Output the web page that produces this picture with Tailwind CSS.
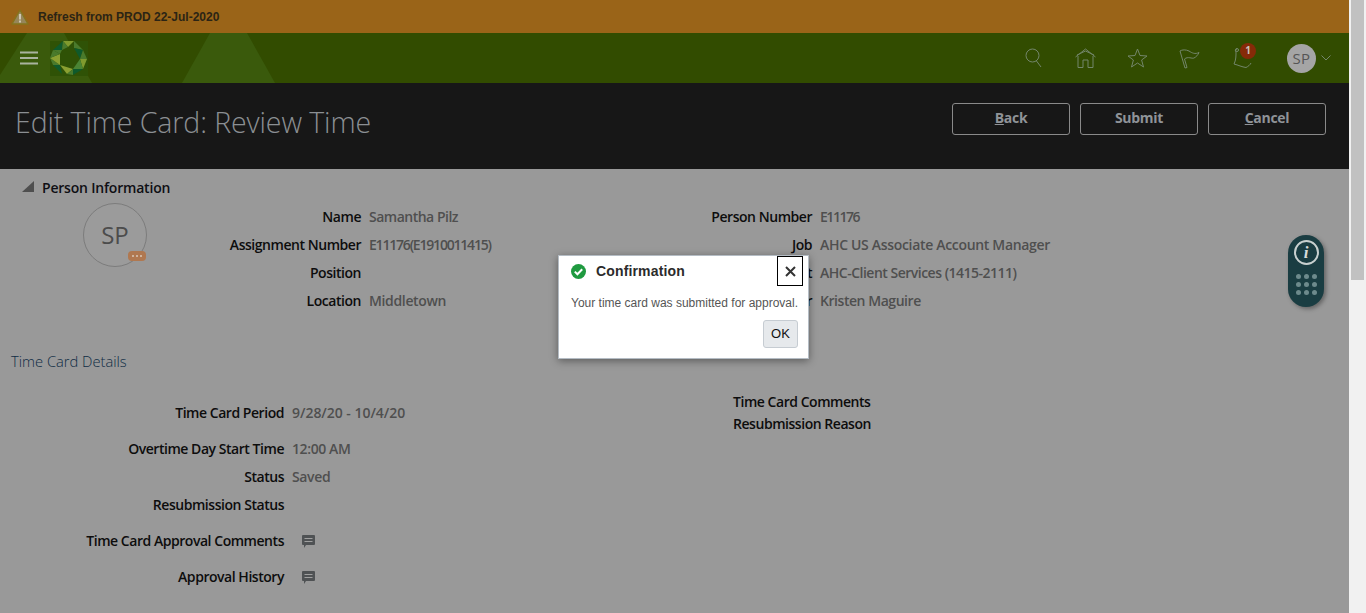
<!DOCTYPE html>
<html>
<head>
<meta charset="utf-8">
<script src="https://cdn.jsdelivr.net/npm/@tailwindcss/browser@4"></script>
</head>
<body class="overflow-hidden">
<div class="relative flex h-[613px] w-[1366px] overflow-hidden font-['Open_Sans',sans-serif]">
  <main class="w-[1349px] shrink-0 bg-[#999999]">
    <div class="flex h-[33px] items-center bg-[#9a6418] pl-[11px] font-['Liberation_Sans',sans-serif] text-[12px] font-bold text-[#2b2415]">
      <svg width="18" height="16" viewBox="0 0 18 16" class="mr-[9px] shrink-0"><path d="M9 1 L17 15 H1 Z" fill="#96865a" stroke="#85741c" stroke-width="1.4" stroke-linejoin="round"/><rect x="8" y="5" width="2" height="5.5" fill="#cfc8b4"/><rect x="8" y="11.5" width="2" height="2" fill="#cfc8b4"/></svg>
      Refresh from PROD 22-Jul-2020
    </div>
    <nav class="relative flex h-[50px] items-center overflow-hidden bg-[#324c00]">
      <svg class="absolute left-0 top-0" width="300" height="50" viewBox="0 0 300 50"><path d="M0 42 L27 0 H64 L92 50 H0 Z" fill="#3a5a0c"/><path d="M210 0 H247 L275 50 H182 Z" fill="#3a5a0c"/></svg>
      <svg class="relative ml-[20px]" width="18" height="14" viewBox="0 0 18 14"><path d="M0 1.5H18M0 7H18M0 12.5H18" stroke="#a9b3a0" stroke-width="2"/></svg>
      <svg class="relative ml-[12px]" width="38" height="35" viewBox="0 0 38 35">
        <rect width="38" height="35" fill="#2f5206"/>
        <path d="M13 0 L24 0 L18 6 Z" fill="#7f9a2e"/><path d="M3 9 L13 0 L12 9 Z" fill="#0f5a2c"/><path d="M13 0 L18 6 L12 9 Z" fill="#4a7a2c"/>
        <path d="M24 0 L33 9 L24 7 Z" fill="#4a7a2c"/><path d="M24 7 L33 9 L30 18 Z" fill="#0f5a2c"/><path d="M33 9 L37 18 L30 18 Z" fill="#4a7a2c"/>
        <path d="M30 18 L37 18 L33 28 Z" fill="#7f9a2e"/><path d="M30 18 L33 28 L23 28 Z" fill="#4a8434"/><path d="M33 28 L23 34 L23 28 Z" fill="#0f5a2c"/>
        <path d="M10 24 L23 28 L17 33 Z" fill="#8aa032"/><path d="M17 33 L23 28 L23 34 Z" fill="#4a7a2c"/><path d="M3 24 L10 24 L12 33 Z" fill="#0f5a2c"/>
        <path d="M0 17 L10 24 L3 24 Z" fill="#4a7a2c"/><path d="M0 17 L10 13 L10 24 Z" fill="#8aa032"/><path d="M3 9 L10 13 L0 17 Z" fill="#4a7a2c"/><path d="M3 9 L12 9 L10 13 Z" fill="#4a7a2c"/>
      </svg>
      <div class="ml-auto flex items-center text-[#73866a]">
        <svg width="18" height="20" viewBox="0 0 18 20" fill="none" stroke="currentColor" stroke-width="1"><circle cx="7.5" cy="7.5" r="6.5"/><path d="M11.5 13 L16 19"/></svg>
        <svg class="ml-[32px]" width="21" height="20" viewBox="0 0 21 20" fill="none" stroke="currentColor" stroke-width="1"><path d="M0.5 9 L10.5 1 L20.5 9M2 7 L10.5 3 L19 7"/><path d="M3 8 V19.5 H8 V12 H13 V19.5 H18 V8"/></svg>
        <svg class="ml-[31px]" width="21" height="20" viewBox="0 0 21 20" fill="none" stroke="currentColor" stroke-width="1"><path d="M10.5 1 L13 7.5 L20 8 L14.6 12 L16.5 19 L10.5 15 L4.5 19 L6.4 12 L1 8 L8 7.5 Z"/></svg>
        <svg class="ml-[31px]" width="21" height="21" viewBox="0 0 21 21" fill="none" stroke="currentColor" stroke-width="1"><path d="M1 3 L6 20 L8 19.5 L5.5 11 C9 8 13 11 15 10 C17 9 19 7 20 4.5 C16 6.5 13 5 10 3 C7 1.5 3 1.5 1 3 Z"/></svg>
        <div class="relative ml-[33px] h-[21px] w-[20px]">
          <svg width="20" height="21" viewBox="0 0 20 21" fill="none" stroke="currentColor" stroke-width="1"><path d="M4 1 C2 1 2 3 3 4 C3 8 3 12 1 16 C5 17 9 19 13 19.5 C15 18.5 17 17 18 15"/><circle cx="4" cy="2" r="1.5"/></svg>
          <span class="absolute left-[7px] top-[-5px] flex h-[16px] w-[16px] items-center justify-center rounded-full bg-[#862a08] text-[10px] font-bold text-[#c9c2bb]">1</span>
        </div>
        <span class="ml-[34px] flex h-[29px] w-[29px] items-center justify-center rounded-full bg-[#a5a5a5] text-[15px] tracking-[0.5px] text-[#555555]">SP</span>
        <svg class="ml-[5px] mr-[18px]" width="10" height="6" viewBox="0 0 10 6" fill="none" stroke="currentColor"><path d="M0.5 0.5 L5 5 L9.5 0.5"/></svg>
      </div>
    </nav>
    <header class="flex h-[86px] items-start justify-between bg-[#171717] pl-[15px] pr-[23px]">
      <h1 class="mt-[18px] text-[28.5px] font-light leading-[42px] tracking-[-0.1px] text-[#8b8f93]">Edit Time Card: Review Time</h1>
      <div class="mt-[20px] flex gap-[10px] text-[14px] font-bold tracking-[-0.3px] text-[#8f9398]">
        <button class="h-[32px] w-[118px] rounded-[3px] border border-[#8a8a8a] pb-[3px]"><u>B</u>ack</button>
        <button class="h-[32px] w-[118px] rounded-[3px] border border-[#8a8a8a] pb-[3px]">Submit</button>
        <button class="h-[32px] w-[118px] rounded-[3px] border border-[#8a8a8a] pb-[3px]"><u>C</u>ancel</button>
      </div>
    </header>
    <section class="text-[14px] font-semibold tracking-[-0.46px] text-[#0d0d0d]">
      <div class="flex h-[37px] items-center pl-[22px]">
        <svg width="12" height="11" viewBox="0 0 12 11" class="mr-[8px] -mt-[2px]"><path d="M12 0 V11 H0 Z" fill="#4f4f4f"/></svg>
        <span class="tracking-[-0.2px] text-[#0f0f14]">Person Information</span>
      </div>
      <div class="-mt-[3px] flex">
        <div class="w-[220px] shrink-0 pl-[83px]">
          <div class="relative flex h-[64px] w-[64px] items-center justify-center rounded-full border border-[#7c7c7c] bg-[#9b9b9b] text-[24px] font-normal tracking-normal text-[#4c4c4c]">SP
            <span class="absolute bottom-[5px] right-[0px] flex h-[10px] w-[18px] items-center justify-center gap-[2px] rounded-[4px] bg-[#b07850]"><i class="h-[2px] w-[2px] rounded-full bg-[#d8c8b8]"></i><i class="h-[2px] w-[2px] rounded-full bg-[#d8c8b8]"></i><i class="h-[2px] w-[2px] rounded-full bg-[#d8c8b8]"></i></span>
          </div>
        </div>
        <div class="-mt-[1px] grid w-[380px] grid-cols-[141px_1fr] auto-rows-[28px] items-center gap-x-[8px]">
          <span class="text-right">Name</span><span class="tracking-[-0.5px] text-[#4f4f4f]">Samantha Pilz</span>
          <span class="whitespace-nowrap text-right">Assignment Number</span><span class="whitespace-nowrap tracking-[-1.2px] text-[#4f4f4f]">E11176(E1910011415)</span>
          <span class="text-right">Position</span><span></span>
          <span class="text-right">Location</span><span class="tracking-[-0.35px] text-[#4f4f4f]">Middletown</span>
        </div>
        <div class="-mt-[1px] grid grid-cols-[212px_1fr] auto-rows-[28px] items-center gap-x-[8px]">
          <span class="text-right">Person Number</span><span class="tracking-[-1.45px] text-[#4f4f4f]">E11176</span>
          <span class="text-right">Job</span><span class="tracking-[-0.32px] text-[#4f4f4f]">AHC US Associate Account Manager</span>
          <span class="text-right">Department</span><span class="tracking-[-0.5px] text-[#4f4f4f]">AHC-Client Services (1415-2111)</span>
          <span class="text-right">Manager</span><span class="tracking-[-0.45px] text-[#4f4f4f]">Kristen Maguire</span>
        </div>
      </div>
      <h2 class="mt-[38px] pl-[11px] text-[14.7px] font-light leading-[18px] tracking-normal text-[#0f2c44]">Time Card Details</h2>
      <div class="mt-[21px] flex">
        <div class="grid w-[733px] shrink-0 grid-cols-[284px_1fr] items-center gap-x-[8px] pt-[11px]">
          <span class="h-[24px] text-right">Time Card Period</span><span class="h-[24px] tracking-[-0.03px] text-[#4f4f4f]">9/28/20 - 10/4/20</span>
          <span class="mt-[12px] h-[28px] text-right">Overtime Day Start Time</span><span class="mt-[12px] h-[28px] tracking-[-0.4px] text-[#4f4f4f]">12:00 AM</span>
          <span class="h-[28px] text-right">Status</span><span class="h-[28px] tracking-[-0.35px] text-[#4f4f4f]">Saved</span>
          <span class="h-[36px] text-right">Resubmission Status</span><span class="h-[36px]"></span>
          <span class="h-[36px] whitespace-nowrap text-right">Time Card Approval Comments</span>
          <span class="h-[36px] pl-[10px] pt-[5px]"><svg width="13" height="14" viewBox="0 0 13 14"><path d="M1 0 H12 Q13 0 13 1 V9 Q13 10 12 10 H4 L2 13 V10 H1 Q0 10 0 9 V1 Q0 0 1 0 Z" fill="#4f5254"/><path d="M2.5 3.5H10.5M2.5 6.5H10.5" stroke="#a0a0a0"/></svg></span>
          <span class="h-[24px] text-right">Approval History</span>
          <span class="h-[24px] pl-[10px] pt-[5px]"><svg width="13" height="14" viewBox="0 0 13 14"><path d="M1 0 H12 Q13 0 13 1 V9 Q13 10 12 10 H4 L2 13 V10 H1 Q0 10 0 9 V1 Q0 0 1 0 Z" fill="#4f5254"/><path d="M2.5 3.5H10.5M2.5 6.5H10.5" stroke="#a0a0a0"/></svg></span>
        </div>
        <div class="w-[137px] whitespace-nowrap text-right leading-[22px]">
          <div>Time Card Comments</div>
          <div>Resubmission Reason</div>
        </div>
      </div>
    </section>
  </main>
  <aside class="w-[17px] shrink-0 bg-[#f1f1f1] pl-[2px]">
    <div class="h-[280px] w-[13px] bg-[#c1c1c1]"></div>
  </aside>

  <div class="absolute left-[1288px] top-[235px] flex h-[72px] w-[36px] flex-col items-center rounded-[18px] bg-[#1a3d42] pt-[5px] shadow-[2px_2px_4px_rgba(0,0,0,0.35)]">
    <span class="flex h-[25px] w-[25px] items-center justify-center rounded-full border-2 border-[#c8d0cf] font-['Liberation_Serif',serif] text-[17px] font-bold italic text-[#d6dcdb]">i</span>
    <div class="mt-[9px] grid grid-cols-3 gap-[3px]">
      <i class="h-[5px] w-[5px] rounded-full bg-[#6d8a8c]"></i><i class="h-[5px] w-[5px] rounded-full bg-[#6d8a8c]"></i><i class="h-[5px] w-[5px] rounded-full bg-[#6d8a8c]"></i>
      <i class="h-[5px] w-[5px] rounded-full bg-[#6d8a8c]"></i><i class="h-[5px] w-[5px] rounded-full bg-[#6d8a8c]"></i><i class="h-[5px] w-[5px] rounded-full bg-[#6d8a8c]"></i>
      <i class="h-[5px] w-[5px] rounded-full bg-[#6d8a8c]"></i><i class="h-[5px] w-[5px] rounded-full bg-[#6d8a8c]"></i><i class="h-[5px] w-[5px] rounded-full bg-[#6d8a8c]"></i>
    </div>
  </div>

  <div class="absolute left-[558px] top-[255px] h-[104px] w-[251px] border border-[#b4bcc4] bg-white font-['Liberation_Sans',sans-serif] shadow-[0_2px_8px_rgba(0,0,0,0.4)]">
    <div class="flex h-[31px] items-center pl-[12px]">
      <svg width="15" height="15" viewBox="0 0 15 15"><circle cx="7.5" cy="7.5" r="7.5" fill="#1f9a40"/><path d="M3.8 7.6 L6.4 10.2 L11.2 5.2" fill="none" stroke="#fff" stroke-width="2"/></svg>
      <span class="ml-[10px] text-[14px] font-bold tracking-[0.15px] text-[#2b2b2b]">Confirmation</span>
      <button class="absolute left-[218px] top-[0px] flex h-[30px] w-[26px] items-center justify-center border border-black"><svg width="11" height="11" viewBox="0 0 11 11"><path d="M1 1 L10 10 M10 1 L1 10" stroke="#333" stroke-width="2"/></svg></button>
    </div>
    <p class="ml-[12px] mt-[8px] text-[12px] leading-[16px] text-[#555555]">Your time card was submitted for approval.</p>
    <button class="absolute left-[204px] top-[64px] h-[28px] w-[35px] rounded-[3px] border border-[#c6ccd2] bg-[#e6e9ec] text-[13px] text-[#111111]">OK</button>
  </div>
</div>
</body>
</html>
